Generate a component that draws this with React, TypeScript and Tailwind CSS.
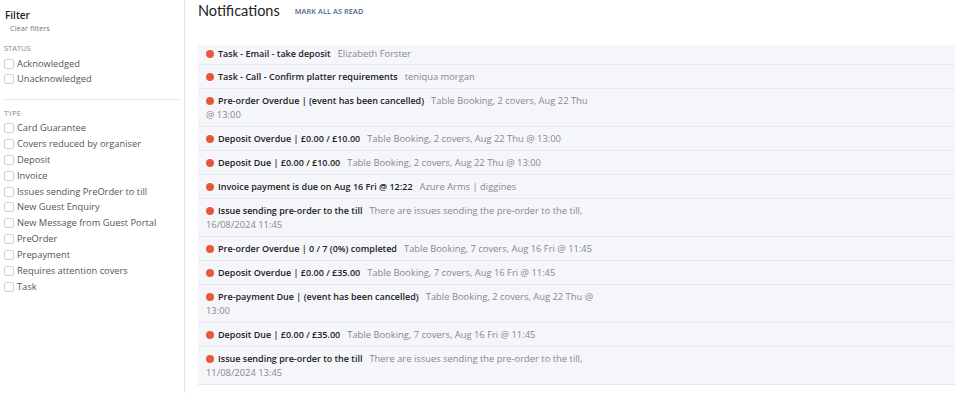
import React from "react";

const status = ["Acknowledged", "Unacknowledged"];
const types = [
  "Card Guarantee",
  "Covers reduced by organiser",
  "Deposit",
  "Invoice",
  "Issues sending PreOrder to till",
  "New Guest Enquiry",
  "New Message from Guest Portal",
  "PreOrder",
  "Prepayment",
  "Requires attention covers",
  "Task",
];

const items: [string, string][] = [
  ["Task - Email - take deposit", "Elizabeth Forster"],
  ["Task - Call - Confirm platter requirements", "teniqua morgan"],
  ["Pre-order Overdue | (event has been cancelled)", "Table Booking, 2 covers, Aug 22 Thu @ 13:00"],
  ["Deposit Overdue | £0.00 / £10.00", "Table Booking, 2 covers, Aug 22 Thu @ 13:00"],
  ["Deposit Due | £0.00 / £10.00", "Table Booking, 2 covers, Aug 22 Thu @ 13:00"],
  ["Invoice payment is due on Aug 16 Fri @ 12:22", "Azure Arms | diggines"],
  ["Issue sending pre-order to the till", "There are issues sending the pre-order to the till, 16/08/2024 11:45"],
  ["Pre-order Overdue | 0 / 7 (0%) completed", "Table Booking, 7 covers, Aug 16 Fri @ 11:45"],
  ["Deposit Overdue | £0.00 / £35.00", "Table Booking, 7 covers, Aug 16 Fri @ 11:45"],
  ["Pre-payment Due | (event has been cancelled)", "Table Booking, 2 covers, Aug 22 Thu @ 13:00"],
  ["Deposit Due | £0.00 / £35.00", "Table Booking, 7 covers, Aug 16 Fri @ 11:45"],
  ["Issue sending pre-order to the till", "There are issues sending the pre-order to the till, 11/08/2024 13:45"],
];

function Check({ label, h }: { label: string; h: string }) {
  return (
    <label className={`flex items-center gap-[3px] ${h} text-[9.3px] text-[#555]`}>
      <span className="w-[10px] h-[10px] border border-[#cfd2d8] rounded-[2px] bg-white shrink-0" />
      <span>{label}</span>
    </label>
  );
}

export default function App() {
  return (
    <div className="flex w-[957px] h-[393px] bg-white overflow-hidden" style={{ fontFamily: '"Open Sans", sans-serif' }}>
      <aside className="w-[185px] shrink-0 border-r border-[#e5e6ea] pl-[4px] pr-[4px] pt-[8px]">
        <div className="pl-[1px] text-[10px] font-semibold text-[#222] leading-[14px]">Filter</div>
        <div className="pl-[6px] text-[7.5px] text-[#6b7a90] leading-[12px]">Clear filters</div>
        <div className="mt-[9px] text-[7.5px] text-[#888] uppercase leading-[10px]">Status</div>
        <div className="mt-[3px] flex flex-col">
          {status.map((s) => (
            <Check key={s} label={s} h="h-[15px]" />
          ))}
        </div>
        <div className="mt-[13px] border-t border-[#e8e9ec]" />
        <div className="mt-[8px] text-[7.5px] text-[#888] uppercase leading-[10px]">Type</div>
        <div className="mt-[2px] flex flex-col">
          {types.map((s) => (
            <Check key={s} label={s} h="h-[15.9px]" />
          ))}
        </div>
      </aside>
      <main className="flex-1 pl-[13px] pr-[2px]">
        <div className="flex items-center h-[22px]">
          <h1 className="text-[14.5px] text-[#222] leading-[20px]" style={{ fontFamily: "Lato, sans-serif" }}>Notifications</h1>
          <button className="ml-[15px] text-[7.3px] font-semibold text-[#4b6584] uppercase tracking-[0.1px]">Mark all as read</button>
        </div>
        <div className="mt-[23px] bg-[#f5f6fa]">
          {items.map(([t, d], i) => (
            <div key={i} className={`border-b border-[#e8e9ee] px-[8px] ${i === 0 ? "pt-[2px] pb-[3px]" : "pt-[5px] pb-[4px]"}`}>
              <div className="w-[390px] text-[9px] leading-[14px]">
                <span className="inline-block w-[8px] h-[8px] rounded-full bg-[#e9573f] align-[-1px] mr-[4px]" />
                <span className="font-semibold text-[#222]">{t}</span>
                <span className="ml-[7px] text-[9.4px] text-[#888]">{d}</span>
              </div>
            </div>
          ))}
        </div>
      </main>
    </div>
  );
}
